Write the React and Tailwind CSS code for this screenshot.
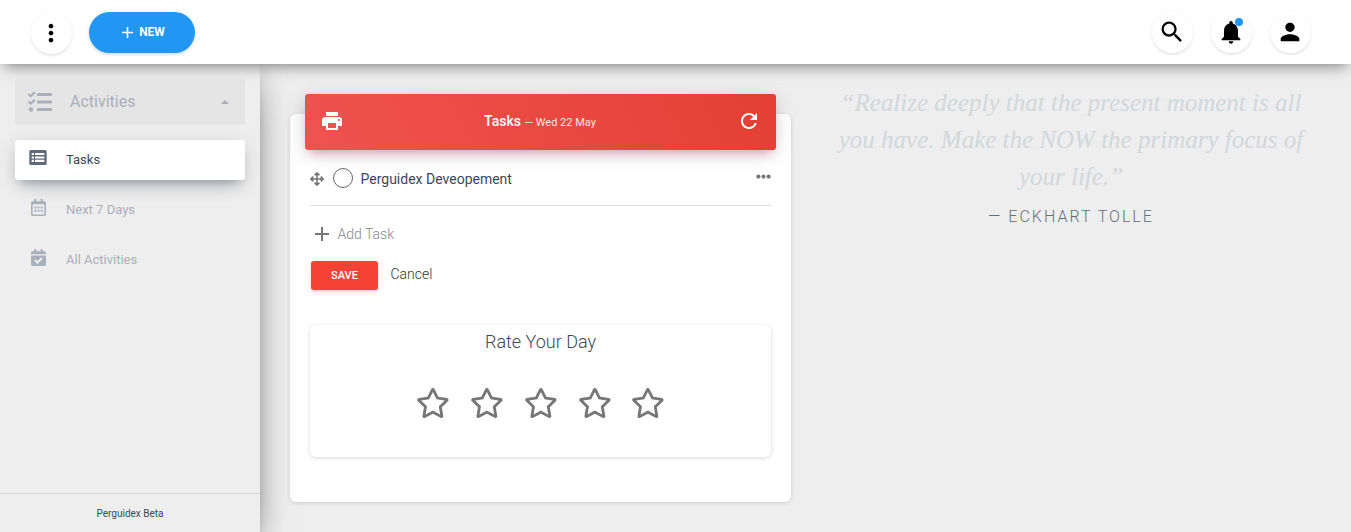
import { MdMoreVert, MdAdd, MdSearch, MdNotifications, MdPerson, MdPrint, MdRefresh } from "react-icons/md";
import { FaTasks, FaRegCalendarAlt, FaCalendarCheck, FaArrowsAlt, FaEllipsisH, FaRegStar } from "react-icons/fa";

function RoundButton({ children, className = "" }) {
  return (
    <button className={`relative flex size-[41px] items-center justify-center rounded-full bg-white pr-[0.5px] text-black shadow-[0_2px_2px_0_rgba(0,0,0,0.06),0_1px_5px_0_rgba(0,0,0,0.06)] ${className}`}>
      {children}
    </button>
  );
}

function TableIcon() {
  return (
    <svg width="18" height="15" viewBox="0 0 18 15">
      <rect x="0.3" width="17.4" height="15" rx="1.5" fill="#5f6b7b" />
      <path fill="#fff" d="M2.7 3h2.2v2.1H2.7zM6 3h9.3v2.1H6zM2.7 6.4h2.2v2.1H2.7zM6 6.4h9.3v2.1H6zM2.7 9.8h2.2v2.1H2.7zM6 9.8h9.3v2.1H6z" />
    </svg>
  );
}

function NavItem({ icon, label, active }) {
  return (
    <a className={`flex h-10 items-center rounded-[3px] pl-3.5 text-[13px] ${active ? "bg-white text-[#3c4858] shadow-[0_12px_20px_-10px_rgba(60,72,88,0.28),0_4px_20px_0_rgba(0,0,0,0.12),0_7px_8px_-5px_rgba(60,72,88,0.3)]" : "text-[#a9afbb]"}`}>
      <span className="flex h-[18px] w-[37px] -translate-y-px items-center justify-start pb-1">{icon}</span>
      {label}
    </a>
  );
}

function Header() {
  return (
    <header className="relative z-20 flex h-16 shrink-0 items-center bg-white pl-[31px] pr-10 shadow-[0_4px_20px_0_rgba(0,0,0,0.08),0_7px_12px_-5px_rgba(33,33,33,0.46)]">
      <RoundButton className="mt-0.5"><MdMoreVert size={28} /></RoundButton>
      <button className="ml-[17px] flex h-[41px] w-[106px] items-center justify-center gap-0.5 rounded-full bg-[#2196f3] pr-px text-xs text-white shadow-[0_2px_2px_0_rgba(33,150,243,0.1),0_1px_4px_0_rgba(0,0,0,0.12)]">
        <MdAdd size={19} />
        <span className="font-bold">NEW</span>
      </button>
      <div className="ml-auto flex gap-[18px]">
        <RoundButton><MdSearch size={28} /></RoundButton>
        <RoundButton>
          <MdNotifications size={28} />
          <span className="absolute left-6 top-1.5 size-2 rounded-full bg-[#2196f3]" />
        </RoundButton>
        <RoundButton><MdPerson size={28} /></RoundButton>
      </div>
    </header>
  );
}

function Sidebar() {
  return (
    <aside className="relative z-10 flex w-[260px] shrink-0 flex-col bg-[#eee] shadow-[0_16px_38px_-12px_rgba(0,0,0,0.56),0_4px_25px_0_rgba(0,0,0,0.12),0_8px_10px_-5px_rgba(0,0,0,0.2)]">
      <nav className="flex flex-1 flex-col gap-2.5 px-[15px] pt-[15px]">
        <div className="mb-[5px] flex h-[46px] items-center rounded-[3px] bg-[#e5e5e5] pl-[13px] pr-4 text-base text-[#a9afbb]">
          <FaTasks size={24} />
          <span className="ml-[18px] flex-1">Activities</span>
          <span className="border-x-4 border-b-4 border-x-transparent border-b-[#a9afbb]" />
        </div>
        <NavItem active icon={<TableIcon />} label="Tasks" />
        <NavItem icon={<FaRegCalendarAlt size={17} className="ml-[0.5px] shrink-0" />} label="Next 7 Days" />
        <NavItem icon={<FaCalendarCheck size={17} className="ml-[0.5px] shrink-0" />} label="All Activities" />
      </nav>
      <footer className="h-[39px] border-t border-[#d5d6d7] pt-3 text-center text-[10px] leading-[15px] text-[#3c4858]">Perguidex Beta</footer>
    </aside>
  );
}

function TaskCard() {
  return (
    <section className="flex h-[388px] w-[501px] flex-col rounded-md bg-white px-[15px] shadow-[0_1px_4px_0_rgba(0,0,0,0.14)]">
      <div className="-mt-5 flex h-14 items-center justify-between rounded-[3px] bg-linear-[60deg,#ef5350,#e53f33] px-[15px] pb-0.5 text-white shadow-[0_4px_20px_0_rgba(0,0,0,0.14),0_7px_10px_-5px_rgba(233,30,99,0.4)]">
        <MdPrint size={24} />
        <h4 className="pb-px pr-px text-sm font-medium">Tasks <span className="text-[11px] font-normal text-[#fde4e4]">— Wed 22 May</span></h4>
        <MdRefresh size={24} />
      </div>
      <div className="px-[5px]">
        <div className="flex h-14 items-center border-b border-[#e0e0e0] text-sm text-[#3c4858]">
          <FaArrowsAlt size={14} className="mt-0.5 text-[#777]" />
          <span className="ml-[9px] size-5 rounded-full border border-[#666]" />
          <span className="ml-[7.5px] mt-0.5 flex-1">Perguidex Deveopement</span>
          <FaEllipsisH size={15} className="mb-0.5 text-[#777]" />
        </div>
        <div className="mt-[17px] flex h-[22px] items-center text-sm font-light text-[#888]">
          <MdAdd size={24} className="text-[#777]" />
          <span className="ml-[3.5px]">Add Task</span>
        </div>
        <div className="mt-4 flex items-center text-sm font-light text-[#333]">
          <button className="ml-px h-[29px] w-[67px] rounded-[3px] bg-[#f44336] text-[11px] font-medium text-white shadow-[0_2px_2px_0_rgba(233,30,99,0.14),0_1px_4px_0_rgba(233,30,99,0.16)]">SAVE</button>
          <span className="mb-[3px] ml-[12.5px]">Cancel</span>
        </div>
        <div className="mt-[35px] h-[132px] rounded-md bg-white pt-[3px] text-center shadow-[0_1px_4px_0_rgba(0,0,0,0.16)]">
          <h4 className="text-lg font-light leading-7 text-[#3c4858]">Rate Your Day</h4>
          <div className="mt-8 flex justify-center gap-5 pl-[0.5px] text-[#777]">
            {[1, 2, 3, 4, 5].map((n) => <FaRegStar key={n} size={30} className="h-[30px] w-[33.75px]" />)}
          </div>
        </div>
      </div>
    </section>
  );
}

export default function App() {
  return (
    <div className="flex h-screen flex-col overflow-hidden bg-[#eee] font-['Roboto',sans-serif]">
      <Header />
      <div className="flex min-h-0 flex-1">
        <Sidebar />
        <main className="flex flex-1 pl-[30px]">
          <div className="pt-[50px]"><TaskCard /></div>
          <blockquote className="flex-1 pt-5 text-center">
            <p className="font-['Liberation_Serif',serif] text-[25px] italic leading-[37px] text-[#cfd8dc]">
              “Realize deeply that the present moment is all<br />you have. Make the NOW the primary focus of<br />your life.”
            </p>
            <cite className="mt-[3px] block text-base font-light not-italic leading-[37px] tracking-[2px] text-[#607080]">— ECKHART TOLLE</cite>
          </blockquote>
        </main>
      </div>
    </div>
  );
}
